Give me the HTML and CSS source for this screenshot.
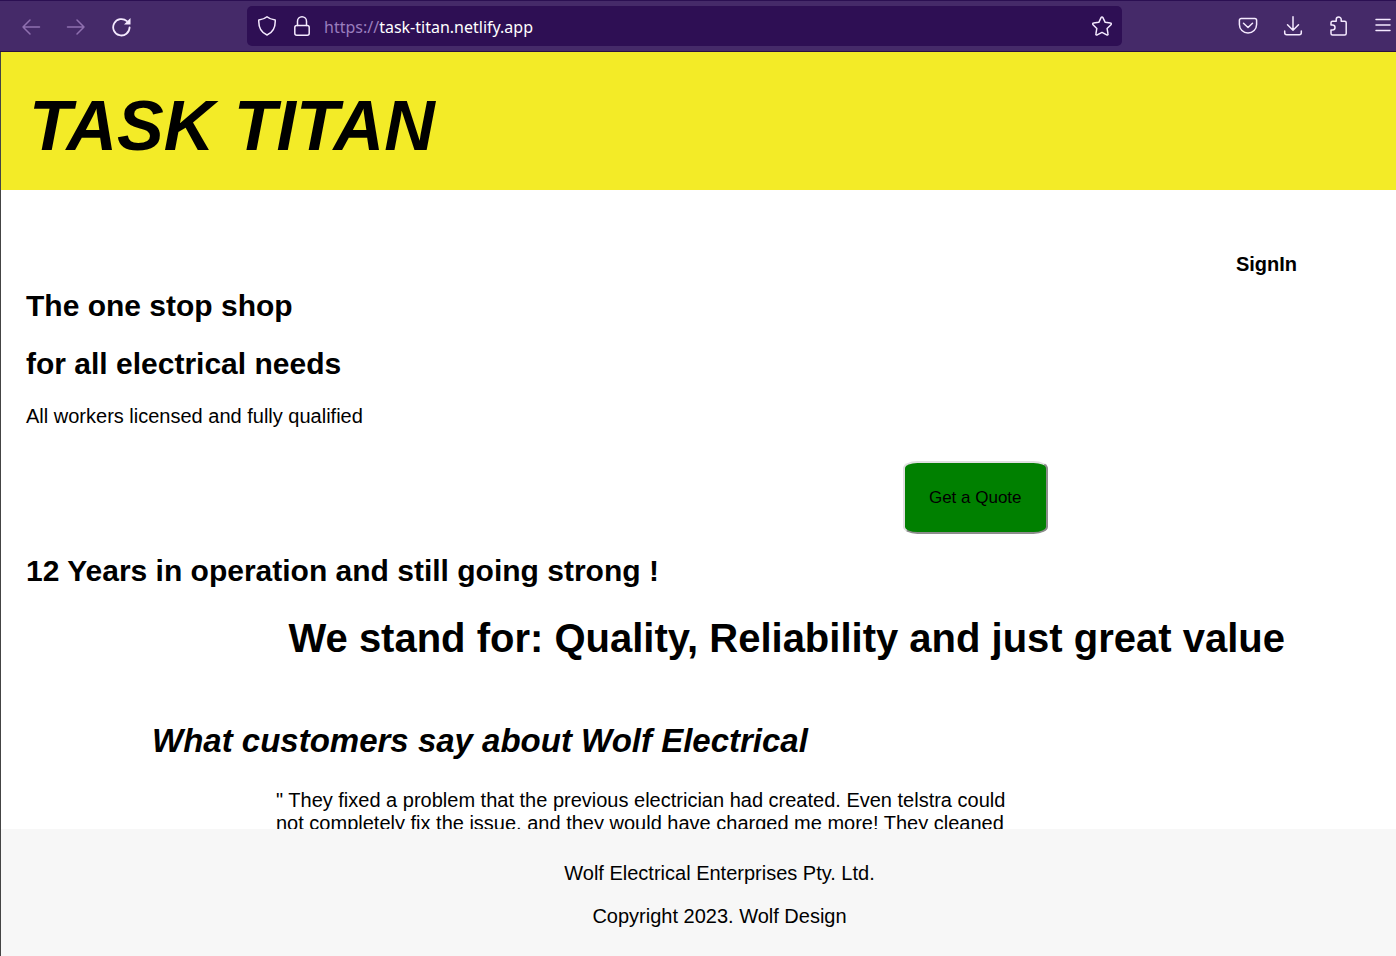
FILE: index.html
```html
<!DOCTYPE html>
<html lang="en">
<head>
<meta charset="utf-8">
<meta name="viewport" content="width=device-width, initial-scale=1">
<title>Task Titan</title>
<link rel="stylesheet" href="styles.css">
</head>
<body>
<nav class="toolbar" aria-label="Browser">
  <div class="nav-buttons">
    <button class="icon-button dim" type="button" aria-label="Back"><svg viewBox="0 0 20 20"><path d="M18.500 10H2M9 3 2 10l7 7"/></svg></button>
    <button class="icon-button dim" type="button" aria-label="Forward"><svg viewBox="0 0 20 20"><path d="M1.500 10H18M11 3l7 7-7 7"/></svg></button>
    <button class="icon-button" type="button" aria-label="Reload"><svg viewBox="0 0 20 20"><path class="thick" d="M18.600 10.300a8.200 8.200 0 1 1-2.700-6.100"/><path class="solid" d="M19.500 1v6.500H13z"/></svg></button>
  </div>
  <div class="address">
    <button class="icon-button" type="button" aria-label="Tracking protection"><svg viewBox="0 0 20 20"><path d="M10 .8c2 1.800 4.700 2.800 8.200 3.200C18.600 11 16 16.500 10 19 4 16.500 1.400 11 1.800 4 5.300 3.600 8 2.600 10 .8z"/></svg></button>
    <button class="icon-button" type="button" aria-label="Site security"><svg viewBox="0 0 20 20"><rect x="2.800" y="9.500" width="14.400" height="9.700" rx="2"/><path d="M5.500 9.500V5.300a4.500 4.500 0 0 1 9 0v4.200"/></svg></button>
    <label class="scheme" for="url">https://</label>
    <input class="url" id="url" type="text" value="task-titan.netlify.app" spellcheck="false">
    <button class="icon-button" type="button" aria-label="Bookmark"><svg viewBox="0 0 20 20"><path d="M9.200 1.400a.9.900 0 0 1 1.600 0l2.400 4.900 5.300.8a.9.900 0 0 1 .5 1.600l-3.900 3.800.9 5.400a.9.900 0 0 1-1.300 1L10 16.400l-4.800 2.500a.9.900 0 0 1-1.300-1l.9-5.400L1 8.700a.9.900 0 0 1 .5-1.600l5.300-.8z"/></svg></button>
  </div>
  <div class="tools">
    <button class="icon-button" type="button" aria-label="Save to Pocket"><svg viewBox="0 0 20 20"><path d="M3.200 2.500h13.600a1.800 1.800 0 0 1 1.800 1.800v4.200a8.600 8.600 0 0 1-17.200 0V4.300a1.800 1.800 0 0 1 1.800-1.800zM5.500 7.300 10 11.500l4.500-4.200"/></svg></button>
    <button class="icon-button" type="button" aria-label="Downloads"><svg viewBox="0 0 20 20"><path d="M10 .8v13.300M4.500 8.700l5.500 5.500 5.500-5.500M1.700 15v1.700a2 2 0 0 0 2 2h12.600a2 2 0 0 0 2-2V15"/></svg></button>
    <button class="icon-button" type="button" aria-label="Extensions"><svg viewBox="0 0 20 20"><path d="M3 9V6.800a1.500 1.500 0 0 1 1.500-1.500h3.700V3.500a2.500 2.500 0 0 1 5 0v1.800h3.500a1.500 1.500 0 0 1 1.500 1.500v10.700a1.500 1.500 0 0 1-1.500 1.500H4.500A1.500 1.500 0 0 1 3 17.500V14h1.500a2.500 2.500 0 0 0 0-5z"/></svg></button>
    <button class="icon-button" type="button" aria-label="Menu"><svg viewBox="0 0 20 20"><path d="M3 3.500h14M3 9h14M3 14.500h14"/></svg></button>
  </div>
</nav>
<div class="site">
  <header class="banner"><h1 class="brand">TASK TITAN</h1></header>
  <main class="content">
    <a class="sign-in" href="#signin">SignIn</a>
    <h2 class="heading">The one stop shop</h2>
    <h2 class="heading">for all electrical needs</h2>
    <p class="lead">All workers licensed and fully qualified</p>
    <button class="quote-button" type="button">Get a Quote</button>
    <h2 class="heading">12 Years in operation and still going strong !</h2>
    <h2 class="values">We stand for: Quality, Reliability and just great value</h2>
    <h2 class="reviews-title">What customers say about Wolf Electrical</h2>
    <p class="review">" They fixed a problem that the previous electrician had created. Even telstra could not completely fix the issue, and they would have charged me more! They cleaned</p>
  </main>
  <footer class="footer">
    <p class="footer-line">Wolf Electrical Enterprises Pty. Ltd.</p>
    <p class="footer-line">Copyright 2023. Wolf Design</p>
  </footer>
</div>
</body>
</html>
```
FILE: styles.css
```css
* {
  box-sizing: border-box;
}

body {
  margin: 0;
  height: 100vh;
  display: flex;
  flex-direction: column;
  overflow: hidden;
  background: #fff;
  color: #000;
  font: 20px/23px "Liberation Sans", Arial, sans-serif;
}

h1, h2, p {
  margin: 0;
}

/* Browser toolbar */
.toolbar {
  flex: none;
  display: flex;
  align-items: center;
  height: 52px;
  border-top: 1px solid #2b0f52;
  border-bottom: 1px solid #2b1040;
  background: #452a69;
}

.nav-buttons {
  display: flex;
  gap: 25px;
  width: 247px;
  padding: 1px 0 0 21px;
}

.icon-button {
  flex: none;
  width: 20px;
  height: 20px;
  padding: 0;
  border: 0;
  background: none;
  color: #f5eaff;
}

.icon-button.dim {
  color: #8f70b0;
}

.icon-button svg {
  display: block;
  width: 20px;
  height: 20px;
  fill: none;
  stroke: currentColor;
  stroke-width: 1.5;
  stroke-linecap: round;
  stroke-linejoin: round;
}

.icon-button .thick {
  stroke-width: 1.8;
}

.icon-button .solid {
  fill: currentColor;
  stroke: none;
}

.address {
  flex: 1;
  display: flex;
  align-items: center;
  gap: 15px;
  height: 40px;
  padding: 0 10px;
  border-radius: 5px;
  background: #2e0f54;
  font: 16px/24px "Noto Sans", sans-serif;
}

.scheme {
  margin-left: -3px;
  margin-right: -15px;
  padding-top: 2px;
  color: #9a7dbd;
}

.url {
  flex: 1;
  min-width: 0;
  padding: 2px 0 0;
  border: 0;
  outline: 0;
  background: none;
  color: #fff;
  font: inherit;
}

.tools {
  display: flex;
  justify-content: flex-end;
  gap: 25px;
  width: 274px;
  padding-right: 3px;
}

/* Site */
.site {
  flex: 1;
  min-height: 0;
  display: flex;
  flex-direction: column;
  border-left: 1px solid #444;
}

.banner {
  flex: none;
  padding: 34px 28px 24px;
  background: #f3eb27;
}

.brand {
  font-size: 70px;
  line-height: 80px;
  font-style: italic;
}

.content {
  flex: 1;
  min-height: 0;
  display: flex;
  flex-direction: column;
  align-items: flex-start;
  padding: 63px 25px 0;
  overflow: hidden;
}

.sign-in {
  align-self: flex-end;
  margin-right: 74px;
  color: inherit;
  font-weight: bold;
  text-decoration: none;
}

.heading {
  margin-bottom: 24px;
  font-size: 30px;
  line-height: 34px;
}

.sign-in + .heading {
  margin-top: 13px;
}

.quote-button {
  margin: 33px 0 20px 65.2%;
  padding: 24px;
  border: 2px outset #e0e0e0;
  border-radius: 10%;
  background: #008000;
  color: #000;
  font: 17px/21px "Liberation Sans", Arial, sans-serif;
}

.values {
  align-self: flex-end;
  margin: 3px 86px 61px 0;
  font-size: 40px;
  line-height: 46px;
}

.reviews-title {
  margin-left: 126px;
  font-size: 33px;
  line-height: 38px;
  font-style: italic;
}

.review {
  width: 55%;
  margin: 29px 0 0 250px;
}

.footer {
  flex: none;
  display: flex;
  flex-direction: column;
  gap: 20px;
  padding: 33px 0 28px 42px;
  background: #f7f7f7;
  text-align: center;
}
```
